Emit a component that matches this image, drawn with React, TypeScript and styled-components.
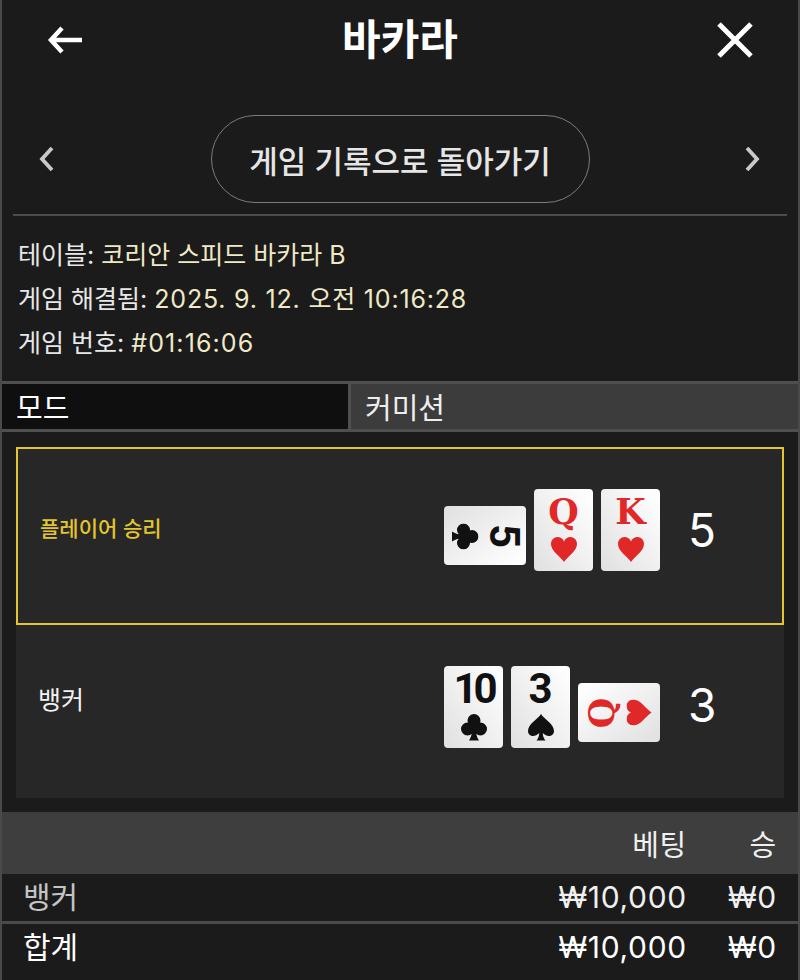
import React from 'react';
import styled, { createGlobalStyle } from 'styled-components';

const GlobalStyle = createGlobalStyle`
  html, body {
    margin: 0;
    padding: 0;
    background: #1b1b1b;
  }
  body {
    font-family: 'Inter', 'Noto Sans CJK KR', sans-serif;
    color: #fff;
  }
`;

const Page = styled.div`
  box-sizing: border-box;
  width: 800px;
  height: 980px;
  overflow: hidden;
  background: #1b1b1b;
  border-left: 2px solid #4a4a4a;
  border-right: 2px solid #4a4a4a;
`;

const Header = styled.header`
  height: 80px;
  padding: 0 43px;
  display: flex;
  align-items: center;
  justify-content: space-between;
`;

const Title = styled.h1`
  margin: 0;
  font-size: 42px;
  line-height: 80px;
  font-weight: 700;
  color: #fff;
`;

const IconButton = styled.div`
  width: 40px;
  height: 40px;
  display: flex;
  align-items: center;
  justify-content: center;
`;

const NavRow = styled.nav`
  box-sizing: border-box;
  margin: 0 11px;
  height: 136px;
  padding: 35px 22px 0;
  display: flex;
  align-items: flex-start;
  justify-content: space-between;
  border-bottom: 2px solid #4d4d4d;
`;

const Chevron = styled.div`
  width: 24px;
  height: 88px;
  display: flex;
  align-items: center;
  justify-content: center;
`;

const Pill = styled.div`
  box-sizing: border-box;
  width: 379px;
  height: 88px;
  border: 1.5px solid #7c7c7c;
  border-radius: 44px;
  display: flex;
  align-items: center;
  justify-content: center;
  font-size: 31px;
  font-weight: 500;
  color: #e6e6e6;
`;

const Info = styled.section`
  padding: 17px 16px 0;
  height: 165px;
  box-sizing: border-box;
`;

const InfoLine = styled.div`
  height: 44px;
  line-height: 44px;
  font-size: 25px;
  color: #e8e8e8;
`;

const InfoValue = styled.span<{ $spacing?: number }>`
  color: #f0e9c6;
  letter-spacing: ${(p) => p.$spacing ?? 0}px;
`;

const Tabs = styled.div`
  display: grid;
  grid-template-columns: 346px 1fr;
  column-gap: 3px;
  height: 51px;
  box-sizing: border-box;
  background: #4f4f4f;
  padding: 3px 0;
`;

const Tab = styled.div<{ $active?: boolean }>`
  display: flex;
  align-items: center;
  padding: 0 0 2px 14px;
  font-size: 29px;
  background: ${(p) => (p.$active ? '#0f0f0f' : '#3c3c3c')};
  color: ${(p) => (p.$active ? '#fff' : '#eee')};
`;

const Results = styled.section`
  padding: 15px 14px 14px;
`;

const ResultRow = styled.div<{ $winner?: boolean }>`
  box-sizing: border-box;
  height: ${(p) => (p.$winner ? '178px' : '173px')};
  background: #272727;
  border: ${(p) => (p.$winner ? '2px solid #e2c52f' : 'none')};
  display: flex;
  align-items: flex-start;
  padding: ${(p) => (p.$winner ? '40px 0 0 22px' : '41px 0 0 22px')};
`;

const ResultLabel = styled.div<{ $winner?: boolean }>`
  flex: 1;
  margin-top: ${(p) => (p.$winner ? '25px' : '19px')};
  font-size: ${(p) => (p.$winner ? '21px' : '25px')};
  line-height: 30px;
  font-weight: ${(p) => (p.$winner ? 500 : 400)};
  color: ${(p) => (p.$winner ? '#e2c52f' : '#f2f2f2')};
`;

const Hand = styled.div`
  display: flex;
  align-items: center;
  gap: 8px;
`;

const Score = styled.div<{ $winner?: boolean }>`
  width: ${(p) => (p.$winner ? '122px' : '124px')};
  margin-top: ${(p) => (p.$winner ? '0' : '-2px')};
  padding-left: 28px;
  box-sizing: border-box;
  font-size: 46px;
  line-height: 82px;
  height: 82px;
  color: #fff;
`;

type Turn = 'none' | 'cw' | 'ccw';

const gradients: Record<Turn, string> = {
  none: 'to bottom left',
  cw: 'to top left',
  ccw: 'to bottom right',
};

const CardShell = styled.div<{ $turn: Turn }>`
  width: ${(p) => (p.$turn === 'none' ? '59px' : '82px')};
  height: ${(p) => (p.$turn === 'none' ? '82px' : '59px')};
  margin-top: ${(p) => (p.$turn === 'none' ? '0' : '11px')};
  border-radius: 4px;
  flex-shrink: 0;
  display: flex;
  align-items: center;
  justify-content: center;
  background: linear-gradient(${(p) => gradients[p.$turn]}, #fdfdfd 10%, #e0e0e0 100%);
`;

const CardFace = styled.div<{ $turn: Turn }>`
  width: 59px;
  height: 82px;
  flex-shrink: 0;
  display: flex;
  flex-direction: column;
  align-items: center;
  transform: rotate(${(p) => (p.$turn === 'cw' ? '90deg' : p.$turn === 'ccw' ? '-90deg' : '0deg')});
`;

const Rank = styled.div<{ $red: boolean; $serif: boolean; $tight: boolean }>`
  height: 42px;
  margin-top: 2px;
  line-height: 42px;
  font-family: ${(p) => (p.$serif ? "'DejaVu Serif', serif" : "'Roboto', sans-serif")};
  font-weight: 700;
  font-size: ${(p) => (p.$serif ? '35px' : '42px')};
  letter-spacing: ${(p) => (p.$tight ? '-4px' : '0')};
  color: ${(p) => (p.$red ? '#e02828' : '#111')};
`;

const SuitBox = styled.div`
  margin-top: 4px;
  display: flex;
`;

const Table = styled.section`
  width: 100%;
`;

const HeadRow = styled.div`
  height: 62px;
  background: #3e3e3e;
  display: grid;
  grid-template-columns: 1fr 130px 90px;
  align-items: center;
  padding: 0 21px 0 22px;
  font-size: 29px;
  color: #f0f0f0;
`;

const BodyRow = styled.div<{ $total?: boolean }>`
  height: ${(p) => (p.$total ? '56px' : '47px')};
  display: grid;
  grid-template-columns: 1fr 230px 90px;
  align-items: start;
  padding: 0 21px;
  font-size: 30px;
  line-height: ${(p) => (p.$total ? '46px' : '47px')};
  color: ${(p) => (p.$total ? '#fff' : '#f0f0f0')};
  border-top: ${(p) => (p.$total ? '3px solid #4a4a4a' : 'none')};
`;

const RowName = styled.div<{ $dim?: boolean }>`
  color: ${(p) => (p.$dim ? '#c4c4c4' : '#fff')};
`;

const Amount = styled.div`
  text-align: right;
  letter-spacing: 0.7px;
`;

const ArrowLeftIcon = () => (
  <svg width="36" height="30" viewBox="0 0 36 30" fill="none" stroke="#fff" strokeWidth="4.5">
    <path d="M35 15H4M15 3L4 15l11 12" />
  </svg>
);

const CloseIcon = () => (
  <svg width="36" height="36" viewBox="0 0 36 36" fill="none" stroke="#fff" strokeWidth="5">
    <path d="M2 2l32 32M34 2L2 34" />
  </svg>
);

const ChevronIcon = ({ right }: { right?: boolean }) => (
  <svg width="16" height="24" viewBox="0 0 16 24" fill="none" stroke="#c9c9c9" strokeWidth="3.8">
    <path d={right ? 'M2 1l10 11L2 23' : 'M13 1L3 12l10 11'} />
  </svg>
);

const suitPaths: Record<string, string> = {
  heart: 'M13 25C9 19 0 14 0 7C0 3 3 0 6.5 0C9.500 0 11.800 1.700 13 4.500C14.200 1.700 16.500 0 19.500 0C23 0 26 3 26 7C26 14 17 19 13 25Z',
  club: 'M13 0a6.500 6.500 0 1 1 0 13a6.500 6.500 0 1 1 0-13ZM6.500 8.500a6.500 6.500 0 1 1 0 13a6.500 6.500 0 1 1 0-13ZM19.500 8.500a6.500 6.500 0 1 1 0 13a6.500 6.500 0 1 1 0-13ZM11.500 10H14.500C14.500 18 15.500 23 18 26.500H8C10.500 23 11.500 18 11.500 10Z',
  spade: 'M13 0C16 5 26 10 26 17C26 20.500 23.500 22 21 22C18.500 22 16 20.500 14.800 19C14.800 21.500 15.500 24 17.500 26.500H8.500C10.500 24 11.200 21.500 11.200 19C10 20.500 7.500 22 5 22C2.500 22 0 20.500 0 17C0 10 10 5 13 0Z',
};

const SuitIcon = ({ suit }: { suit: string }) => (
  <svg width="26" height="27" viewBox="0 0 26 27">
    <path d={suitPaths[suit]} fill={suit === 'heart' ? '#e02828' : '#111'} />
  </svg>
);

interface CardProps {
  rank: string;
  suit: 'heart' | 'club' | 'spade';
  turn?: Turn;
}

const Card = ({ rank, suit, turn = 'none' }: CardProps) => (
  <CardShell $turn={turn}>
    <CardFace $turn={turn}>
      <Rank $red={suit === 'heart'} $serif={rank === 'Q' || rank === 'K'} $tight={rank === '10'}>
        {rank}
      </Rank>
      <SuitBox>
        <SuitIcon suit={suit} />
      </SuitBox>
    </CardFace>
  </CardShell>
);

export default function App() {
  return (
    <Page>
      <GlobalStyle />
      <Header>
        <IconButton>
          <ArrowLeftIcon />
        </IconButton>
        <Title>바카라</Title>
        <IconButton>
          <CloseIcon />
        </IconButton>
      </Header>
      <NavRow>
        <Chevron>
          <ChevronIcon />
        </Chevron>
        <Pill>게임 기록으로 돌아가기</Pill>
        <Chevron>
          <ChevronIcon right />
        </Chevron>
      </NavRow>
      <Info>
        <InfoLine>
          테이블: <InfoValue>코리안 스피드 바카라 B</InfoValue>
        </InfoLine>
        <InfoLine>
          게임 해결됨: <InfoValue $spacing={0.8}>2025. 9. 12. 오전 10:16:28</InfoValue>
        </InfoLine>
        <InfoLine>
          게임 번호: <InfoValue $spacing={1.1}>#01:16:06</InfoValue>
        </InfoLine>
      </Info>
      <Tabs>
        <Tab $active>모드</Tab>
        <Tab>커미션</Tab>
      </Tabs>
      <Results>
        <ResultRow $winner>
          <ResultLabel $winner>플레이어 승리</ResultLabel>
          <Hand>
            <Card rank="5" suit="club" turn="cw" />
            <Card rank="Q" suit="heart" />
            <Card rank="K" suit="heart" />
          </Hand>
          <Score $winner>5</Score>
        </ResultRow>
        <ResultRow>
          <ResultLabel>뱅커</ResultLabel>
          <Hand>
            <Card rank="10" suit="club" />
            <Card rank="3" suit="spade" />
            <Card rank="Q" suit="heart" turn="ccw" />
          </Hand>
          <Score>3</Score>
        </ResultRow>
      </Results>
      <Table>
        <HeadRow>
          <span />
          <Amount>베팅</Amount>
          <Amount>승</Amount>
        </HeadRow>
        <BodyRow>
          <RowName $dim>뱅커</RowName>
          <Amount>₩10,000</Amount>
          <Amount>₩0</Amount>
        </BodyRow>
        <BodyRow $total>
          <RowName>합계</RowName>
          <Amount>₩10,000</Amount>
          <Amount>₩0</Amount>
        </BodyRow>
      </Table>
    </Page>
  );
}
